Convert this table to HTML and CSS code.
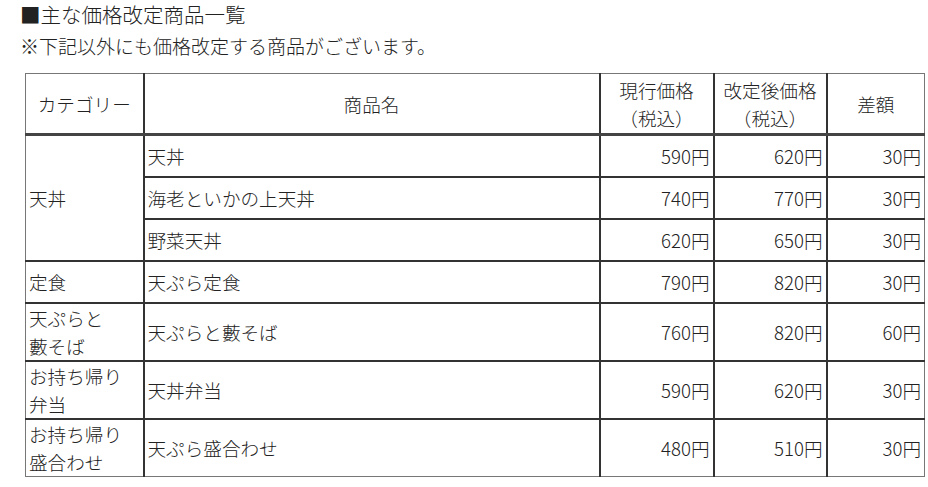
FILE: index.html
```html
<!DOCTYPE html>
<html lang="ja">
<head>
<meta charset="utf-8">
<link rel="stylesheet" href="styles.css">
</head>
<body>
<div class="page">
  <p class="title">■主な価格改定商品一覧</p>
  <p class="note">※下記以外にも価格改定する商品がございます。</p>
  <table class="price-table">
    <colgroup>
      <col class="c-cat"><col class="c-name"><col class="c-cur"><col class="c-new"><col class="c-diff">
    </colgroup>
    <thead>
      <tr>
        <th>カテゴリー</th>
        <th>商品名</th>
        <th>現行価格<br>（税込）</th>
        <th>改定後価格<br>（税込）</th>
        <th>差額</th>
      </tr>
    </thead>
    <tbody>
      <tr class="single">
        <td rowspan="3" class="cat">天丼</td>
        <td>天丼</td><td class="num">590円</td><td class="num">620円</td><td class="num">30円</td>
      </tr>
      <tr class="single">
        <td>海老といかの上天丼</td><td class="num">740円</td><td class="num">770円</td><td class="num">30円</td>
      </tr>
      <tr class="single">
        <td>野菜天丼</td><td class="num">620円</td><td class="num">650円</td><td class="num">30円</td>
      </tr>
      <tr class="single">
        <td class="cat">定食</td>
        <td>天ぷら定食</td><td class="num">790円</td><td class="num">820円</td><td class="num">30円</td>
      </tr>
      <tr>
        <td class="cat">天ぷらと<br>藪そば</td>
        <td>天ぷらと藪そば</td><td class="num">760円</td><td class="num">820円</td><td class="num">60円</td>
      </tr>
      <tr>
        <td class="cat">お持ち帰り<br>弁当</td>
        <td>天丼弁当</td><td class="num">590円</td><td class="num">620円</td><td class="num">30円</td>
      </tr>
      <tr class="last">
        <td class="cat">お持ち帰り<br>盛合わせ</td>
        <td>天ぷら盛合わせ</td><td class="num">480円</td><td class="num">510円</td><td class="num">30円</td>
      </tr>
    </tbody>
  </table>
</div>
</body>
</html>
```

FILE: styles.css
```css
html, body {
  margin: 0;
  padding: 0;
  background: #fff;
}

body {
  font-family: "Noto Sans CJK JP", "Noto Sans", sans-serif;
  font-weight: 300;
  color: #222;
}

.page {
  padding: 0 0 0 20px;
}

.title {
  margin: 0;
  font-size: 20.5px;
  line-height: 28px;
}

.note {
  margin: 4px 0 0;
  font-size: 19px;
  line-height: 28px;
}

.price-table {
  margin: 13px 0 0 5px;
  width: 899px;
  border-collapse: collapse;
  table-layout: fixed;
  font-size: 18.6px;
  line-height: 28px;
}

.c-cat { width: 118px; }
.c-name { width: 456px; }
.c-cur { width: 114px; }
.c-new { width: 113px; }
.c-diff { width: 98px; }

.price-table th,
.price-table td {
  border: 2px solid #333;
  padding: 0 3px;
  vertical-align: middle;
}

.price-table th {
  font-weight: 300;
  text-align: center;
  height: 58px;
  padding-top: 1px;
  padding-bottom: 0;
  border-top: 1px solid #777;
  border-bottom: 3px solid #444;
}

.price-table td {
  text-align: left;
}

.price-table tr.single td {
  height: 40px;
}

.price-table tr.single td.cat[rowspan] {
  height: auto;
}

.price-table td.num {
  text-align: right;
}

.price-table th:first-child,
.price-table td.cat {
  border-left: 1px solid #777;
}

.price-table th:last-child,
.price-table td:last-child {
  border-right: 1px solid #777;
}

.price-table tr.last td {
  border-bottom: 1px solid #777;
}
```
